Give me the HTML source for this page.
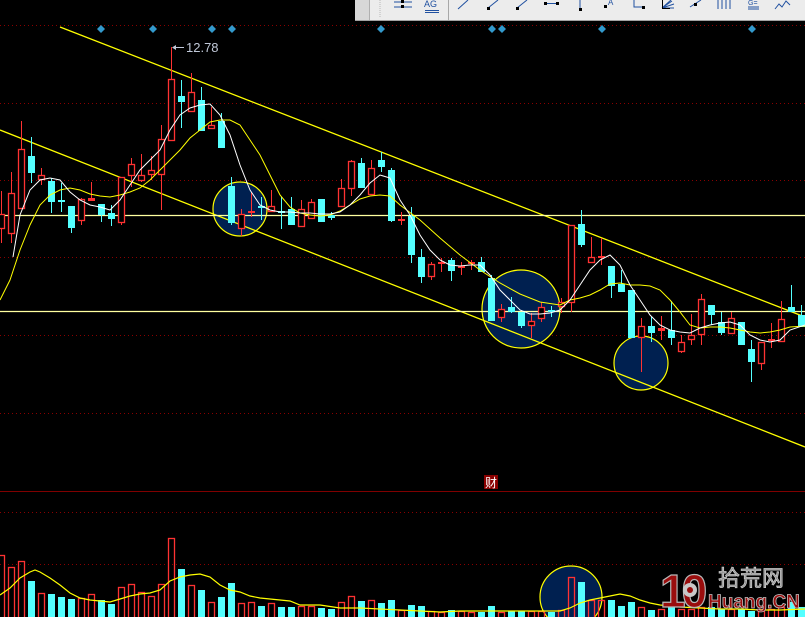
<!DOCTYPE html>
<html><head><meta charset="utf-8"><style>
html,body{margin:0;padding:0;background:#000;width:805px;height:617px;overflow:hidden}
svg{display:block}
</style></head><body>
<svg id="s" width="805" height="617" viewBox="0 0 805 617" xmlns="http://www.w3.org/2000/svg">
<rect width="805" height="617" fill="#000"/>
<g stroke="#8a0000" stroke-dasharray="1,3" stroke-width="1">
<line x1="0" y1="25.5" x2="805" y2="25.5"/>
<line x1="0" y1="103.5" x2="805" y2="103.5"/>
<line x1="0" y1="180.5" x2="805" y2="180.5"/>
<line x1="0" y1="257.5" x2="805" y2="257.5"/>
<line x1="0" y1="335.5" x2="805" y2="335.5"/>
<line x1="0" y1="413.5" x2="805" y2="413.5"/>
<line x1="0" y1="512.5" x2="805" y2="512.5"/>
<line x1="0" y1="564.5" x2="805" y2="564.5"/>
</g>
<line x1="0" y1="491.5" x2="805" y2="491.5" stroke="#800000"/>
<g fill="#002050" stroke="#ffff00" stroke-width="1.2">
<circle cx="240" cy="209" r="27"/>
<circle cx="521" cy="309" r="39"/>
<circle cx="641" cy="363" r="27"/>
<circle cx="571" cy="597" r="31"/>
</g>
<g stroke="#ffff00" stroke-width="1.3">
<line x1="60" y1="27" x2="805" y2="317"/>
<line x1="0" y1="130" x2="805" y2="447"/>
<line x1="0" y1="215.5" x2="805" y2="215.5" stroke="#ffffa0"/>
<line x1="0" y1="311.5" x2="805" y2="311.5" stroke="#ffffa0"/>
</g>
<g id="cd"></g>
<polyline fill="none" stroke="#ffff00" stroke-width="1" points="0,300 10,280 20,250 30,225 40,205 50,195 60,190 70,188 80,190 90,194 100,196 110,197 120,195 130,192 140,188 150,180 160,170 170,160 180,150 190,138 200,130 210,122 220,120 230,120 240,125 250,140 260,155 270,175 280,195 290,207 300,213 310,215 320,216 330,215 340,211 350,205 360,199 370,196 380,195 390,196 400,205 420,220 440,238 460,255 480,270 500,283 520,294 540,302 560,305 570,300 580,298 590,295 600,290 610,284 620,283 630,285 640,285 650,286 660,290 670,300 680,312 690,325 700,328 710,327 720,327 730,328 740,330 750,332 760,333 770,332 780,330 790,327 805,326"/>
<polyline fill="none" stroke="#ffffff" stroke-width="1" points="13,257 20,215 30,190 40,180 50,178 60,180 70,192 80,200 90,205 100,207 110,210 120,200 130,185 140,170 150,160 160,150 170,130 180,115 190,108 200,105 210,104 220,115 230,135 240,165 250,190 260,205 270,210 280,212 290,212 300,213 310,213 320,214 330,214 340,212 350,205 360,195 370,183 380,175 390,178 400,200 410,215 420,235 430,250 440,260 450,265 460,266 470,265 480,265 490,275 500,290 510,300 520,310 530,314 540,314 550,313 560,310 570,300 580,285 590,270 600,260 610,255 620,265 630,285 640,300 650,315 660,325 670,330 680,332 690,333 700,328 710,325 720,323 730,322 740,325 750,335 760,340 770,342 780,340 790,330 805,325"/>
<polyline fill="none" stroke="#ffff00" stroke-width="1.2" points="0,595 10,588 20,578 30,572 35,570 40,572 50,578 60,585 70,593 80,598 90,600 100,601 110,602 120,599 130,596 140,594 150,593 160,590 170,581 180,577 190,575 200,574 210,577 220,585 230,590 240,592 250,596 260,598 270,599 280,600 290,601 300,605 320,605 340,608 360,608 380,609 400,610 420,611 440,612 460,611 540,611 560,611 570,608 580,603 590,600 600,598 610,596 620,594 630,596 640,600 650,603 660,605 680,607 700,608 720,609 740,609 760,610 780,610 805,609"/>
<g fill="#3399cc">
<path d="M101 25l4 4-4 4-4-4z"/><path d="M153 25l4 4-4 4-4-4z"/><path d="M212 25l4 4-4 4-4-4z"/><path d="M232 25l4 4-4 4-4-4z"/><path d="M381 25l4 4-4 4-4-4z"/><path d="M492 25l4 4-4 4-4-4z"/><path d="M502 25l4 4-4 4-4-4z"/><path d="M602 25l4 4-4 4-4-4z"/><path d="M752 25l4 4-4 4-4-4z"/>
</g>
<line x1="173" y1="47.5" x2="184" y2="47.5" stroke="#c0c8d8"/>
<path d="M172 47.5l4-2.5v5z" fill="#c0c8d8"/>
<text x="186" y="52" fill="#c0c8d8" font-family="Liberation Sans, sans-serif" font-size="13">12.78</text>
<rect x="484" y="475" width="14" height="14" fill="#8a0000"/>
<text x="485" y="487" fill="#fff" font-family="Liberation Sans, 'Noto Sans CJK SC', sans-serif" font-size="12">财</text>
<!-- toolbar -->
<rect x="355" y="0" width="450" height="20" fill="#ececec"/>
<rect x="355" y="0" width="14" height="20" fill="#d8d8d8"/>
<line x1="369.5" y1="0" x2="369.5" y2="20" stroke="#b0b0b0"/>
<line x1="380" y1="0" x2="380" y2="17" stroke="#b8b8b8" stroke-dasharray="1,1"/>
<line x1="448.5" y1="0" x2="448.5" y2="20" stroke="#a8a8a8"/>
<line x1="355" y1="20.5" x2="805" y2="20.5" stroke="#a0a0a0"/>
<g stroke="#2050a0" fill="none" stroke-width="1">
<line x1="394" y1="2" x2="412" y2="2"/><line x1="394" y1="7" x2="412" y2="7"/>
<line x1="425" y1="10.5" x2="439" y2="10.5"/><line x1="425" y1="12.5" x2="439" y2="12.5"/>
<line x1="458" y1="9" x2="468" y2="0"/>
<line x1="488" y1="8" x2="498" y2="0"/>
<line x1="517" y1="8" x2="527" y2="0"/>
<line x1="545" y1="3.5" x2="558" y2="3.5"/>
<line x1="580" y1="0" x2="580" y2="9"/>
<path d="M634 0v7h9"/>
<path d="M662 8l10-7M662 8l12-4M662 8l12 0M662 8l9-8"/>
<line x1="690" y1="7" x2="701" y2="0"/>
<path d="M718 0v9M722 0v9M726 0v9M730 0v9"/>
<path d="M748 7h11M748 9h11"/>
<path d="M775 9l4-5 3 3 4-6 4 4"/>
</g>
<g fill="#000">
<rect x="401" y="0" width="3" height="3"/><rect x="401" y="5" width="3" height="3"/>
<rect x="487" y="7" width="3" height="3"/><rect x="516" y="7" width="3" height="3"/>
<rect x="544" y="2" width="3" height="3"/><rect x="556" y="2" width="3" height="3"/>
<rect x="579" y="8" width="3" height="3"/><rect x="604" y="5" width="3" height="3"/>
<rect x="642" y="6" width="3" height="3"/><rect x="694" y="3" width="3" height="3"/>
<path d="M662 9h8v-1h-7v-8h-1z"/>
</g>
<text x="424" y="7" fill="#2050a0" font-family="Liberation Sans, sans-serif" font-size="9">AG</text>
<text x="608" y="5" fill="#2050a0" font-family="Liberation Sans, sans-serif" font-size="8">A</text>
<text x="748" y="5" fill="#2050a0" font-family="Liberation Sans, sans-serif" font-size="7">G=</text>
<!-- watermark -->
<g font-family="Liberation Sans, 'Noto Sans CJK SC', sans-serif" font-weight="bold">
<text x="660" y="607" fill="#9a0d0d" stroke="#b8b8b8" stroke-width="1.2" font-size="46" letter-spacing="-4">10</text>
<circle cx="690" cy="590" r="7" fill="#c8c8c8"/>
<circle cx="690" cy="590" r="3" fill="#9a0d0d"/>
<text x="718" y="586" fill="#8a8a8a" stroke="#c8c8c8" stroke-width="0.8" font-size="22" font-weight="normal">拾荒网</text>
<text x="708" y="608" fill="#9a0d0d" stroke="#c0c0c0" stroke-width="0.8" font-size="19">Huang.CN</text>
</g>
</svg>
<script>
var D=[
['r',214,229,191,243],['r',193,234,172,243],['r',149,209,121,209],['c',156,173,137,183],['r',175,180,168,185],
['c',181,202,178,213],['c',200,202,183,212],['c',206,228,206,233],['r',199,221,198,225],['r',198,201,182,201],
['c',204,215,204,222],['c',213,219,205,226],['r',177,223,177,225],['r',164,176,158,187],['r',175,181,154,182],
['r',170,175,156,180],['r',139,175,125,210],['r',79,141,47,141],['c',96,102,80,128],['r',92,112,73,112],
['c',100,131,87,131],['r',125,129,107,129],['c',121,148,113,148],['c',186,223,177,225],['r',214,229,209,236],
['r',211,213,192,217],['c',206,207,197,220],['r',206,212,190,212],['c',211,213,197,229],['c',209,225,197,225],
['r',209,227,200,227],['r',202,219,199,219],['c',199,222,199,222],['c',215,218,212,220],['r',188,207,179,207],
['r',161,189,160,196],['c',163,188,158,188],['r',168,195,160,195],['c',160,167,152,172],['c',170,221,168,222],
['r',219,221,212,225],['c',216,255,207,263],['c',257,277,249,283],['r',264,277,262,280],['r',262,264,258,272],
['c',260,271,258,281],['r',266,268,262,275],['r',262,264,260,270],['c',262,272,257,272],['c',278,321,275,321],
['r',309,318,304,322],['c',307,312,297,313],['c',312,326,312,328],['r',321,326,313,338],['r',307,319,302,322],
['c',310,312,306,317],['r',302,307,298,313],['r',225,303,225,312],['c',224,245,210,247],['r',257,263,237,263],
['r',256,258,238,265],['c',266,286,266,298],['c',284,292,270,292],['c',290,338,290,338],['r',326,338,318,372],
['c',326,333,317,342],['r',328,331,316,340],['c',330,338,301,345],['r',342,352,335,353],['r',335,340,314,345],
['r',299,335,294,345],['c',305,315,305,325],['c',322,333,312,335],['r',318,334,312,334],['c',322,345,322,345],
['c',349,362,340,382],['r',342,364,342,370],['r',339,341,323,348],['r',319,342,301,342],['c',307,312,285,312],
['c',315,327,305,327]];
var V=[555,567,561,581,593,594,597,599,598,594,600,604,587,584,592,596,584,538,569,585,590,602,597,583,603,602,606,603,607,607,606,606,608,609,602,596,601,600,603,600,610,605,606,611,612,610,611,612,612,606,612,611,611,611,611,612,610,577,582,600,600,600,606,602,607,610,609,607,609,609,607,607,609,609,609,611,609,609,607,602,607];
var R='#ff3232',C='#54ffff',h='';
for(var i=0;i<D.length;i++){var d=D[i],l=-2+10*i,cx=l+3.5,col=d[0]=='r'?R:C;
h+='<line x1="'+cx+'" y1="'+d[3]+'" x2="'+cx+'" y2="'+d[4]+'" stroke="'+col+'"/>';
var hh=d[2]-d[1];
if(d[0]=='r'&&hh>3)h+='<rect x="'+(l+0.5)+'" y="'+(d[1]+0.5)+'" width="6" height="'+(hh-1)+'" fill="#000" stroke="'+R+'" stroke-width="1.3"/>';
else h+='<rect x="'+l+'" y="'+d[1]+'" width="7" height="'+Math.max(hh,2)+'" fill="'+col+'"/>';
var v=V[i];
if(d[0]=='r')h+='<rect x="'+(l+0.5)+'" y="'+(v+0.5)+'" width="6" height="'+(618-v)+'" fill="none" stroke="'+R+'" stroke-width="1.3"/>';
else h+='<rect x="'+l+'" y="'+v+'" width="7" height="'+(617-v)+'" fill="'+C+'"/>';}
document.getElementById('cd').innerHTML=h;
</script>
</body></html>
